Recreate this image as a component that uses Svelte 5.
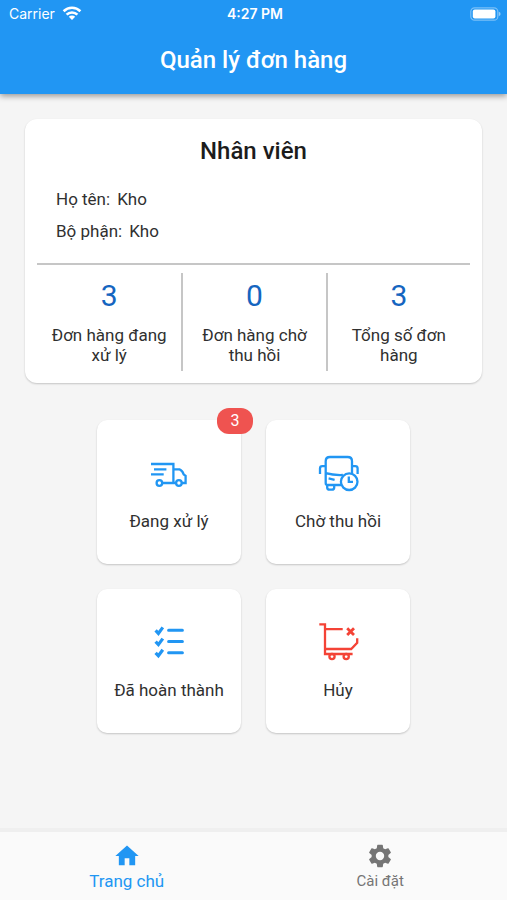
<script lang="ts">
  type Tile = {
    id: string;
    label: string;
    href: string;
    badge?: number;
  };

  const employee = [
    { label: 'Họ tên:', value: 'Kho' },
    { label: 'Bộ phận:', value: 'Kho' }
  ];

  const stats = [
    { value: 3, label: 'Đơn hàng đang xử lý' },
    { value: 0, label: 'Đơn hàng chờ thu hồi' },
    { value: 3, label: 'Tổng số đơn hàng' }
  ];

  const tiles: Tile[] = [
    { id: 'processing', label: 'Đang xử lý', href: '#processing', badge: 3 },
    { id: 'recall', label: 'Chờ thu hồi', href: '#recall' },
    { id: 'done', label: 'Đã hoàn thành', href: '#done' },
    { id: 'cancelled', label: 'Hủy', href: '#cancelled' }
  ];

  let tab = $state('home');
</script>

<div class="screen">
  <header>
    <div class="status">
      <span class="carrier">
        Carrier
        <svg width="20" height="14" viewBox="0 0 20 14" fill="none" stroke="currentColor" stroke-width="2.6" aria-hidden="true">
          <path d="M1.6 5.2a12 12 0 0 1 16.8 0" />
          <path d="M4.6 8.7a7.6 7.6 0 0 1 10.8 0" />
          <path d="M10 14 6.8 10.8a4.5 4.5 0 0 1 6.4 0z" fill="currentColor" stroke="none" />
        </svg>
      </span>
      <span class="clock">4:27 PM</span>
      <span class="battery">
        <svg width="31" height="14" viewBox="0 0 31 14" aria-hidden="true">
          <rect x="0.8" y="0.8" width="27" height="12.4" rx="3.8" fill="none" stroke="#fff" stroke-opacity="0.4" stroke-width="1.2" />
          <rect x="2.8" y="2.4" width="22.6" height="9.2" rx="2" fill="#fff" />
          <path d="M28.8 4.8q1.8.6 1.8 2.2t-1.8 2.2z" fill="#fff" fill-opacity="0.5" />
        </svg>
      </span>
    </div>
    <h1>Quản lý đơn hàng</h1>
  </header>

  <main>
    <section class="card" aria-labelledby="employee-title">
      <h2 id="employee-title">Nhân viên</h2>
      <dl class="info">
        {#each employee as row}
          <div>
            <dt>{row.label}</dt>
            <dd>{row.value}</dd>
          </div>
        {/each}
      </dl>
      <div class="stats">
        {#each stats as stat}
          <div class="stat">
            <strong>{stat.value}</strong>
            <span>{stat.label}</span>
          </div>
        {/each}
      </div>
    </section>

    <nav class="tiles" aria-label="Đơn hàng">
      {#each tiles as tile}
        <a class="tile" class:danger={tile.id === 'cancelled'} href={tile.href}>
          <svg width="40" height="40" viewBox="0 0 40 40" fill="none" stroke="currentColor" stroke-width="2.3" aria-hidden="true">
            {#if tile.id === 'processing'}
              <path d="M2 10h22.4v19M5 15.3h12.4M2 20.3h12.7M13.2 29h13.6M24.4 15.3h6q3.2 1.4 4.2 5l2 1.6V29H33" />
              <circle cx="10.4" cy="29" r="2.8" />
              <circle cx="29.9" cy="29" r="2.8" />
            {:else if tile.id === 'recall'}
              <path d="M23 31H9.5q-1.8 0-1.8-2V7.2Q7.7 3 12 3h17.6Q34 3 34 7.2v12M7.7 19.2q8 2.2 17.2 1.8" />
              <path d="M2 20v-5.6q0-2.2 2.4-2.2h3M39.6 20v-5.6q0-2.2-2.4-2.2h-3M10.6 24.4l6 1.4M9.2 31v2.4q0 2.2 2.4 2.2h2.2q2.4 0 2.4-2.2V31" />
              <circle cx="31.2" cy="27.7" r="8.3" />
              <path d="M30.8 22.6v5.2h4.2" />
            {:else if tile.id === 'done'}
              <path d="M19.6 7.3h13.8M19.6 18.6h13.8M19.6 29.8h13.8" stroke-width="3" stroke-linecap="round" />
              <path d="M6.6 7.4 9.4 10.4l4.4-6M6.6 18.6l2.8 3 4.4-6M6.6 29.8l2.8 3 4.4-6" stroke-width="3.2" />
            {:else}
              <path d="M1.3 1.4H7V31h27.6M7 6.2h17.7M7 26h26.2l6-6.2v-4.6" />
              <circle cx="14" cy="33.6" r="2.6" />
              <circle cx="28.2" cy="33.6" r="2.6" />
              <path d="m29.2 5.2 6.8 6.8m0-6.8L29.2 12" stroke-width="2.8" />
            {/if}
          </svg>
          <span>{tile.label}</span>
          {#if tile.badge}
            <span class="badge">{tile.badge}</span>
          {/if}
        </a>
      {/each}
    </nav>
  </main>

  <footer>
    <button type="button" class:active={tab === 'home'} onclick={() => (tab = 'home')}>
      <svg width="28" height="28" viewBox="0 0 24 24" fill="currentColor" aria-hidden="true">
        <path d="M10 20v-6h4v6h5v-8h3L12 3 2 12h3v8z" />
      </svg>
      <span>Trang chủ</span>
    </button>
    <button type="button" class:active={tab === 'settings'} onclick={() => (tab = 'settings')}>
      <svg width="28" height="28" viewBox="0 0 24 24" fill="currentColor" aria-hidden="true">
        <path d="M19.14 12.94c.04-.3.06-.61.06-.94s-.02-.64-.07-.94l2.03-1.58c.18-.14.23-.41.12-.61l-1.92-3.32c-.12-.22-.37-.29-.59-.22l-2.39.96c-.5-.38-1.03-.7-1.62-.94l-.36-2.54c-.04-.24-.24-.41-.48-.41h-3.84c-.24 0-.43.17-.47.41l-.36 2.54c-.59.24-1.13.57-1.62.94l-2.39-.96c-.22-.08-.47 0-.59.22L2.74 8.87c-.12.21-.08.47.12.61l2.03 1.58c-.05.3-.09.63-.09.94s.02.64.07.94l-2.03 1.58c-.18.14-.23.41-.12.61l1.92 3.32c.12.22.37.29.59.22l2.39-.96c.5.38 1.03.7 1.62.94l.36 2.54c.05.24.24.41.48.41h3.84c.24 0 .44-.17.47-.41l.36-2.54c.59-.24 1.13-.56 1.62-.94l2.39.96c.22.08.47 0 .59-.22l1.92-3.32c.12-.22.07-.47-.12-.61zM12 15.6A3.6 3.6 0 1 1 12 8.4a3.6 3.6 0 0 1 0 7.2z" />
      </svg>
      <span>Cài đặt</span>
    </button>
  </footer>
</div>

<style>
  :global(body) { margin: 0; background: #f5f5f5; }
  .screen { min-height: 100vh; display: flex; flex-direction: column; background: #f5f5f5; color: #303030; font-family: Roboto, "Liberation Sans", sans-serif; font-size: 17px; line-height: 20px; }
  h1, h2, dl, dd { margin: 0; }
  header { background: #2196f3; color: #fff; box-shadow: 0 2px 6px rgba(0, 0, 0, 0.4); }
  .status { display: grid; grid-template-columns: 1fr auto 1fr; align-items: center; height: 28px; padding: 0 6px 0 9px; font-family: Inter, Roboto, sans-serif; font-size: 14px; }
  .carrier { display: flex; align-items: center; gap: 7px; }
  .carrier svg { margin-bottom: 2px; }
  .clock { font-weight: 600; }
  .battery { display: flex; justify-content: flex-end; }
  h1 { padding: 16px 0 18px; font-size: 24px; font-weight: 500; line-height: 32px; text-align: center; }
  main { flex: 1; padding: 25px; }
  .card { padding: 16px 12px 12px; border-radius: 12px; background: #fff; box-shadow: 0 1px 2px rgba(0, 0, 0, 0.2); }
  h2 { color: #1c1c1c; font-size: 24px; font-weight: 500; line-height: 32px; text-align: center; }
  .info { display: grid; gap: 12px; padding: 22px 19px; }
  .info div { display: flex; gap: 7px; }
  .stats { display: grid; grid-template-columns: repeat(3, 1fr); padding-top: 8px; border-top: 2px solid #c6c6c6; }
  .stat { display: flex; flex-direction: column; align-items: center; gap: 12px; padding: 6px 12px; text-align: center; }
  .stat + .stat { border-left: 2px solid #c6c6c6; }
  .stat strong { color: #1565c0; font-size: 30px; font-weight: 400; line-height: 34px; }
  .tiles { display: grid; grid-template-columns: 144px 144px; justify-content: center; gap: 25px; margin-top: 37px; }
  .tile { position: relative; display: flex; flex-direction: column; align-items: center; gap: 17px; height: 144px; box-sizing: border-box; padding-top: 34px; border-radius: 10px; background: #fff; box-shadow: 0 1px 2px rgba(0, 0, 0, 0.2); color: #303030; text-decoration: none; }
  .tile svg { overflow: visible; color: #2196f3; }
  .danger svg { color: #f44336; }
  .badge { position: absolute; top: -12px; right: -12px; width: 36px; border-radius: 12px; background: #ef5350; color: #fff; font-size: 16px; line-height: 26px; text-align: center; }
  footer { display: grid; grid-template-columns: 1fr 1fr; border-top: 4px solid #efefef; background: #fafafa; }
  button { display: flex; flex-direction: column; align-items: center; height: 68px; padding: 10px 0 0; border: 0; background: none; color: #757575; font: inherit; font-size: 15px; line-height: 22px; cursor: pointer; }
  .tile .danger { color: #f44336; }
  .tile.danger svg { color: #f44336; }
  .active { color: #2196f3; font-size: 17px; }
</style>
